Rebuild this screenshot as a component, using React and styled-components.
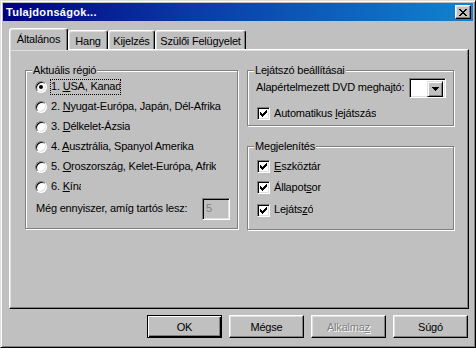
import React from "react";
import styled, { createGlobalStyle } from "styled-components";

const GlobalStyle = createGlobalStyle`
  html, body { margin: 0; padding: 0; background: #c0c0c0; }
  body {
    font-family: "Liberation Sans", Arial, sans-serif;
    font-size: 11px;
    letter-spacing: -0.2px;
    color: #000;
  }
  * { box-sizing: border-box; }
`;

const Window = styled.div`
  width: 476px;
  height: 348px;
  display: flex;
  flex-direction: column;
  background: #c0c0c0;
  border: 1px solid;
  border-color: #dfdfdf #000 #000 #dfdfdf;
  box-shadow: inset 1px 1px #fff, inset -1px -1px #808080;
  padding: 2px;
`;

const TitleBar = styled.div`
  flex: none;
  height: 18px;
  display: flex;
  align-items: center;
  justify-content: space-between;
  padding: 0 2px 0 3px;
  background: linear-gradient(90deg, #000080 0%, #0a3aa6 40%, #1084d0 100%);
`;

const Title = styled.span`
  color: #fff;
  font-weight: bold;
  font-size: 11px;
  letter-spacing: 0.3px;
`;

const CloseButton = styled.div`
  width: 16px;
  height: 14px;
  display: flex;
  align-items: center;
  justify-content: center;
  background: #c0c0c0;
  border: 1px solid;
  border-color: #fff #000 #000 #fff;
  box-shadow: inset -1px -1px #808080, inset 1px 1px #dfdfdf;
`;

const Body = styled.div`
  flex: 1;
  display: flex;
  flex-direction: column;
  padding: 7px 4px 0 6px;
`;

const TabRow = styled.div`
  display: flex;
  align-items: flex-end;
  height: 21px;
`;

const Tab = styled.div`
  width: ${(p) => p.$w}px;
  height: ${(p) => (p.$active ? 22 : 19)}px;
  margin-bottom: ${(p) => (p.$active ? -1 : 0)}px;
  z-index: ${(p) => (p.$active ? 1 : 0)};
  display: flex;
  align-items: center;
  justify-content: center;
  padding: ${(p) => (p.$active ? "0 0 2px 0" : "1px 0 0 0")};
  background: #c0c0c0;
  border: 1px solid;
  border-bottom: none;
  border-color: #fff #000 transparent #fff;
  border-radius: 3px 3px 0 0;
  box-shadow: inset -1px 0 #808080, inset 1px 1px #dfdfdf;
  white-space: nowrap;
`;

const Panel = styled.div`
  width: 460px;
  height: 260px;
  border: 1px solid;
  border-color: #fff #000 #000 #fff;
  box-shadow: inset -1px -1px #808080, inset 1px 1px #dfdfdf;
  padding: 14px 0 0 15px;
  display: grid;
  grid-template-columns: 213px 207px;
  column-gap: 9px;
  align-items: start;
`;

const Column = styled.div`
  display: flex;
  flex-direction: column;
  gap: 14px;
`;

const Group = styled.fieldset`
  margin: 0;
  min-width: 0;
  height: ${(p) => p.$h}px;
  padding: ${(p) => p.$pad};
  border: 1px solid #808080;
  box-shadow: inset 1px 1px #fff, 1px 1px #fff;
`;

const Legend = styled.legend`
  padding: 0 1px;
  margin-left: ${(p) => p.$ml}px;
  line-height: 13px;
  background: #c0c0c0;
`;

const Row = styled.div`
  display: flex;
  align-items: center;
  height: ${(p) => p.$h || 20}px;
  margin-top: ${(p) => p.$mt || 0}px;
  justify-content: ${(p) => p.$justify || "flex-start"};
`;

const Radio = styled.span`
  flex: none;
  width: 12px;
  height: 12px;
  border-radius: 50%;
  background: #fff;
  border: 1px solid;
  border-color: #808080 #fff #fff #808080;
  box-shadow: inset 1px 1px #000, inset -1px -1px #dfdfdf;
  display: flex;
  align-items: center;
  justify-content: center;
  &::after {
    content: "";
    width: 4px;
    height: 4px;
    border-radius: 50%;
    background: ${(p) => (p.$on ? "#000" : "transparent")};
  }
`;

const Label = styled.span`
  margin-left: ${(p) => p.$ml ?? 3}px;
  border: 1px dotted ${(p) => (p.$focus ? "#000" : "transparent")};
  padding: 0 0 1px 0;
  white-space: nowrap;
  overflow: hidden;
  max-width: ${(p) => (p.$clip ? `${p.$clip}px` : "none")};
  line-height: 13px;
`;

const Key = styled.u`
  text-decoration: underline;
  text-underline-offset: 1px;
`;

const Check = styled.span`
  flex: none;
  width: 13px;
  height: 13px;
  margin-left: 2px;
  background: #fff;
  border: 1px solid;
  border-color: #808080 #fff #fff #808080;
  box-shadow: inset 1px 1px #000, inset -1px -1px #dfdfdf;
  display: flex;
  align-items: center;
  justify-content: center;
`;

const SpinBox = styled.div`
  width: 28px;
  height: 22px;
  margin-left: auto;
  margin-right: 7px;
  border: 1px solid;
  border-color: #808080 #fff #fff #808080;
  box-shadow: inset 1px 1px #000, inset -1px -1px #dfdfdf;
  background: #c0c0c0;
  color: #808080;
  padding: 3px 0 0 3px;
  line-height: 13px;
`;

const Combo = styled.div`
  width: 37px;
  height: 20px;
  border: 1px solid;
  border-color: #808080 #fff #fff #808080;
  box-shadow: inset 1px 1px #000, inset -1px -1px #dfdfdf;
  background: #fff;
  display: flex;
  justify-content: flex-end;
  padding: 2px;
`;

const DropButton = styled.div`
  width: 16px;
  height: 16px;
  background: #c0c0c0;
  border: 1px solid;
  border-color: #dfdfdf #000 #000 #dfdfdf;
  box-shadow: inset 1px 1px #fff, inset -1px -1px #808080;
  display: flex;
  align-items: center;
  justify-content: center;
`;

const ButtonRow = styled.div`
  display: flex;
  justify-content: flex-end;
  gap: 7px;
  margin-top: 6px;
  padding-right: 1px;
`;

const Button = styled.div`
  width: 75px;
  height: 23px;
  display: flex;
  align-items: center;
  justify-content: center;
  background: #c0c0c0;
  border: 1px solid #000;
  border-color: ${(p) => (p.$default ? "#000" : "#fff #000 #000 #fff")};
  box-shadow: ${(p) =>
    p.$default
      ? "inset 1px 1px #fff, inset -1px -1px #000, inset -2px -2px #808080"
      : "inset -1px -1px #808080, inset 1px 1px #dfdfdf"};
  color: ${(p) => (p.$disabled ? "#808080" : "#000")};
  text-shadow: ${(p) => (p.$disabled ? "1px 1px #fff" : "none")};
`;

const CloseGlyph = () => (
  <svg width="8" height="7" viewBox="0 0 8 7" shapeRendering="crispEdges">
    <path
      fill="#000"
      d="M0 0h2v1H0zM6 0h2v1H6zM1 1h2v1H1zM5 1h2v1H5zM2 2h4v1H2zM3 3h2v1H3zM2 4h4v1H2zM1 5h2v1H1zM5 5h2v1H5zM0 6h2v1H0zM6 6h2v1H6z"
    />
  </svg>
);

const CheckGlyph = () => (
  <svg width="7" height="7" viewBox="0 0 7 7" shapeRendering="crispEdges">
    <path
      fill="#000"
      d="M6 0h1v3H6zM5 1h1v3H5zM4 2h1v3H4zM3 3h1v3H3zM2 4h1v3H2zM1 3h1v3H1zM0 2h1v3H0z"
    />
  </svg>
);

const Arrow = () => (
  <svg width="7" height="4" viewBox="0 0 7 4" shapeRendering="crispEdges">
    <path fill="#000" d="M0 0h7v1H0zM1 1h5v1H1zM2 2h3v1H2zM3 3h1v1H3z" />
  </svg>
);

const regions = [
  { pre: "1. ", key: "U", rest: "SA, Kanada", on: true, focus: true, clip: 71 },
  { pre: "2. ", key: "N", rest: "yugat-Európa, Japán, Dél-Afrika" },
  { pre: "3. ", key: "D", rest: "élkelet-Ázsia" },
  { pre: "4. ", key: "A", rest: "usztrália, Spanyol Amerika", clip: 168 },
  { pre: "5. ", key: "O", rest: "roszország, Kelet-Európa, Afrika", clip: 167 },
  { pre: "6. ", key: "K", rest: "ína", clip: 32 },
];

export default function App() {
  return (
    <>
      <GlobalStyle />
      <Window>
        <TitleBar>
          <Title>Tulajdonságok...</Title>
          <CloseButton>
            <CloseGlyph />
          </CloseButton>
        </TitleBar>
        <Body>
          <TabRow>
            <Tab $active $w={59}>Általános</Tab>
            <Tab $w={40}>Hang</Tab>
            <Tab $w={47}>Kijelzés</Tab>
            <Tab $w={91}>Szülői Felügyelet</Tab>
          </TabRow>
          <Panel>
            <Group $h={165} $pad="0 0 0 9px">
              <Legend $ml={-3}>Aktuális régió</Legend>
              {regions.map((r, i) => (
                <Row key={i}>
                  <Radio $on={r.on} />
                  <Label $focus={r.focus} $clip={r.clip}>
                    {r.pre}
                    <Key>{r.key}</Key>
                    {r.rest}
                  </Label>
                </Row>
              ))}
              <Row $h={23}>
                <Label $ml={0}>Még ennyiszer, amíg tartós lesz:</Label>
                <SpinBox>5</SpinBox>
              </Row>
            </Group>
            <Column>
              <Group $h={62} $pad="1px 7px 0 7px">
                <Legend $ml={-1}>Lejátszó beállításai</Legend>
                <Row $justify="space-between">
                  <Label $ml={0}>Alapértelmezett DVD meghajtó:</Label>
                  <Combo>
                    <DropButton>
                      <Arrow />
                    </DropButton>
                  </Combo>
                </Row>
                <Row $h={15} $mt={8}>
                  <Check>
                    <CheckGlyph />
                  </Check>
                  <Label $ml={3}>
                    Automatikus <Key>l</Key>ejátszás
                  </Label>
                </Row>
              </Group>
              <Group $h={90} $pad="3px 7px 0 7px">
                <Legend $ml={-1}>Megjelenítés</Legend>
                <Row $h={21}>
                  <Check>
                    <CheckGlyph />
                  </Check>
                  <Label $ml={3}>
                    <Key>E</Key>szköztár
                  </Label>
                </Row>
                <Row $h={21}>
                  <Check>
                    <CheckGlyph />
                  </Check>
                  <Label $ml={3}>
                    Állapot<Key>s</Key>or
                  </Label>
                </Row>
                <Row $h={22} $mt={1}>
                  <Check>
                    <CheckGlyph />
                  </Check>
                  <Label $ml={3}>
                    Lejáts<Key>z</Key>ó
                  </Label>
                </Row>
              </Group>
            </Column>
          </Panel>
          <ButtonRow>
            <Button $default>OK</Button>
            <Button>Mégse</Button>
            <Button $disabled>
              <span>
                Alkalma<Key>z</Key>
              </span>
            </Button>
            <Button>Súgó</Button>
          </ButtonRow>
        </Body>
      </Window>
    </>
  );
}
